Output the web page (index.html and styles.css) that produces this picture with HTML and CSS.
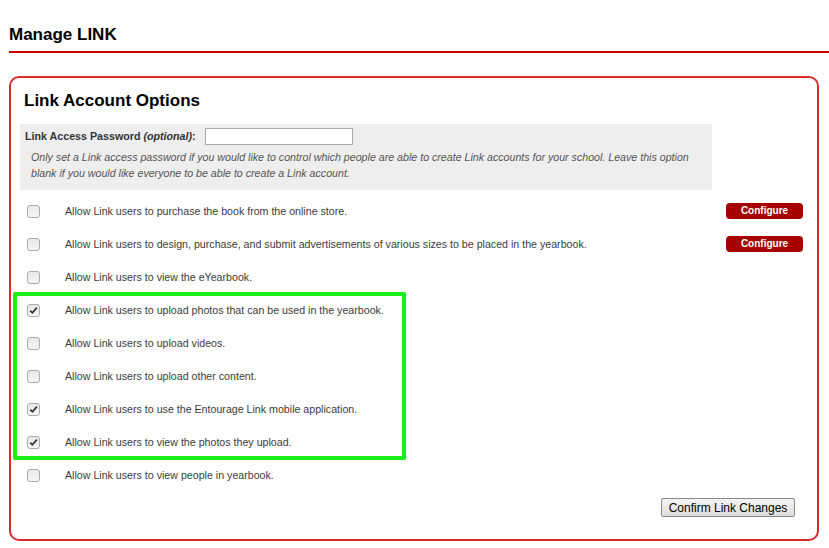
FILE: index.html
```html
<!DOCTYPE html>
<html>
<head>
<meta charset="utf-8">
<title>Manage LINK</title>
<link rel="stylesheet" href="styles.css">
</head>
<body>
<h1 class="page-title">Manage LINK</h1>
<section class="card">
  <h2 class="card-title">Link Account Options</h2>
  <div class="pw-box">
    <div class="pw-row">
      <label class="pw-label" for="pw">Link Access Password <em>(optional)</em>:</label>
      <input class="pw-input" id="pw" type="text">
    </div>
    <p class="pw-note">Only set a Link access password if you would like to control which people are able to create Link accounts for your school. Leave this option blank if you would like everyone to be able to create a Link account.</p>
  </div>
  <ul class="options">
    <li class="opt"><input class="cb" type="checkbox"><span class="opt-text">Allow Link users to purchase the book from the online store.</span><button class="cfg">Configure</button></li>
    <li class="opt"><input class="cb" type="checkbox"><span class="opt-text">Allow Link users to design, purchase, and submit advertisements of various sizes to be placed in the yearbook.</span><button class="cfg">Configure</button></li>
    <li class="opt"><input class="cb" type="checkbox"><span class="opt-text">Allow Link users to view the eYearbook.</span></li>
    <li class="opt"><input class="cb" type="checkbox" checked><span class="opt-text">Allow Link users to upload photos that can be used in the yearbook.</span></li>
    <li class="opt"><input class="cb" type="checkbox"><span class="opt-text">Allow Link users to upload videos.</span></li>
    <li class="opt"><input class="cb" type="checkbox"><span class="opt-text">Allow Link users to upload other content.</span></li>
    <li class="opt"><input class="cb" type="checkbox" checked><span class="opt-text">Allow Link users to use the Entourage Link mobile application.</span></li>
    <li class="opt"><input class="cb" type="checkbox" checked><span class="opt-text">Allow Link users to view the photos they upload.</span></li>
    <li class="opt"><input class="cb" type="checkbox"><span class="opt-text">Allow Link users to view people in yearbook.</span></li>
  </ul>
  <div class="actions"><button class="confirm">Confirm Link Changes</button></div>
</section>
<div class="highlight"></div>
</body>
</html>
```
FILE: styles.css
```css
html, body {
  margin: 0;
  background: #fff;
}
body {
  position: relative;
  padding: 25px 0 0 9px;
  font-family: "Liberation Sans", Arial, sans-serif;
  color: #000;
}
.page-title {
  margin: 0;
  font-size: 17px;
  line-height: 20px;
  font-weight: bold;
  padding-bottom: 6px;
  border-bottom: 2px solid #cc0000;
}
.card {
  margin: 23px 10px 0 0;
  border: 2px solid #dd2a30;
  border-radius: 10px;
  padding: 13px 0 22px 0;
}
.card-title {
  margin: 0 0 13px 13px;
  font-size: 17px;
  line-height: 20px;
  font-weight: bold;
}
.pw-box {
  margin-left: 9px;
  width: 692px;
  background: #eeeeee;
  padding: 4px 0 8px 0;
  box-sizing: border-box;
  height: 66px;
}
.pw-row {
  display: flex;
  align-items: center;
  padding-left: 5px;
  height: 16px;
}
.pw-label {
  flex: none;
  width: 180px;
  font-size: 10.7px;
  font-weight: bold;
  color: #333;
}
.pw-label em {
  font-style: italic;
}
.pw-input {
  width: 148px;
  height: 17px;
  box-sizing: border-box;
  border: 1px solid #a9a9a9;
  background: #fff;
  margin: 0;
  padding: 0;
}
.pw-note {
  margin: 5px 0 0 0;
  padding: 0 14px 0 11px;
  font-size: 10.65px;
  line-height: 16px;
  font-style: italic;
  color: #555;
}
.options {
  list-style: none;
  margin: 4px 0 0 0;
  padding: 0;
}
.opt {
  display: flex;
  align-items: center;
  height: 33px;
  padding: 0 14px 0 16px;
}
.cb {
  appearance: none;
  -webkit-appearance: none;
  width: 13px;
  height: 13px;
  margin: 1px 25px 0 0;
  flex: none;
  box-sizing: border-box;
  border: 1px solid #ababab;
  border-radius: 3px;
  background: linear-gradient(#e8e8e8, #f6f6f6);
}
.cb:checked {
  background-image: url("data:image/svg+xml;utf8,<svg xmlns='http://www.w3.org/2000/svg' viewBox='0 0 11 11'><path d='M2.2 5.6 L4.4 7.8 L8.9 2.6' fill='none' stroke='%23333' stroke-width='1.7'/></svg>"), linear-gradient(#e8e8e8, #f6f6f6);
  background-size: 11px 11px, auto;
  background-repeat: no-repeat;
}
.opt-text {
  flex: 1;
  font-size: 10.65px;
  color: #3c3c3c;
}
.cfg {
  width: 77px;
  height: 16px;
  padding: 0;
  border: none;
  border-radius: 4px;
  background: #a60000;
  color: #fff;
  font-family: "Liberation Sans", Arial, sans-serif;
  font-size: 10px;
  font-weight: bold;
  line-height: 16px;
  margin-top: 1px;
}
.actions {
  display: flex;
  justify-content: flex-end;
  padding-right: 22px;
  margin-top: 7px;
}
.confirm {
  width: 134px;
  height: 19px;
  padding: 0;
  font-family: "Liberation Sans", Arial, sans-serif;
  font-size: 12px;
  color: #000;
  border: 1px solid #8a8a8a;
  border-radius: 2px;
  background: linear-gradient(#f4f4f4, #dddddd);
}
.highlight {
  position: absolute;
  left: 13px;
  top: 292px;
  width: 393px;
  height: 168px;
  box-sizing: border-box;
  border: 4px solid #18f018;
  border-radius: 2px;
  pointer-events: none;
}
```
